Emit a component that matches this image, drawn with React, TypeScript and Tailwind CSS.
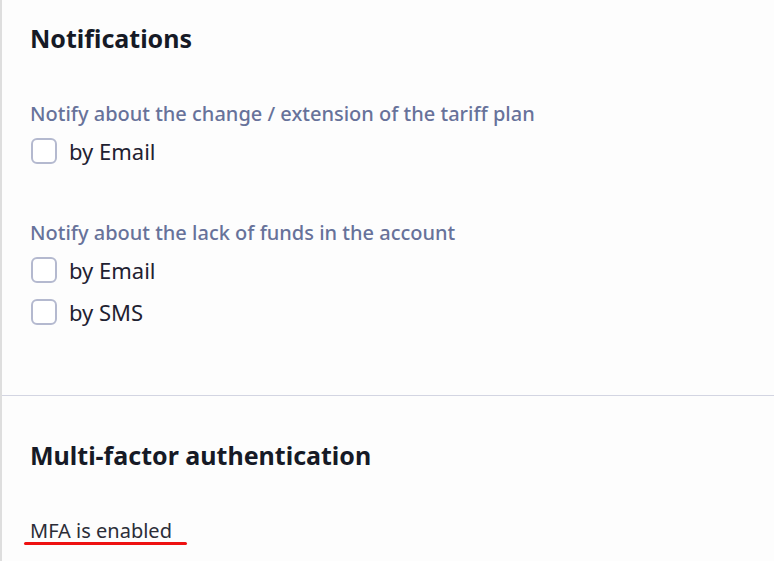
import React from 'react';

interface OptionProps {
  label: string;
}

const CheckOption: React.FC<OptionProps> = ({ label }) => (
  <label className="flex items-center gap-[12px] h-[42px] cursor-pointer">
    <span className="ml-[1px] w-[26px] h-[26px] rounded-[6px] border-2 border-[#b4b9cf] bg-white shrink-0" />
    <span className="text-[22px] text-[#1f2131] leading-[28px]">{label}</span>
  </label>
);

const NotifyGroup: React.FC<{ title: string; options: string[] }> = ({ title, options }) => (
  <div>
    <p className="text-[20px] font-medium text-[#67729a] leading-[24px]">{title}</p>
    <div className="mt-[4px]">
      {options.map((o) => (
        <CheckOption key={o} label={o} />
      ))}
    </div>
  </div>
);

export default function App() {
  return (
    <div
      className="w-full h-[561px] bg-[#fdfdfd] border-l-2 border-[#dedede] overflow-hidden"
      style={{ fontFamily: '"Noto Sans", Inter, sans-serif' }}
    >
      {/* notifications */}
      <section className="pl-[28px] pt-[22px] h-[396px] border-b border-[#d3d5e2]">
        <h2 className="text-[25px] font-bold text-[#161a26] leading-[32px]">Notifications</h2>
        <div className="mt-[48px] flex flex-col gap-[49px]">
          <NotifyGroup title="Notify about the change / extension of the tariff plan" options={['by Email']} />
          <NotifyGroup title="Notify about the lack of funds in the account" options={['by Email', 'by SMS']} />
        </div>
      </section>

      {/* mfa */}
      <section className="pl-[28px] pt-[43px]">
        <h2 className="text-[25px] font-bold text-[#161a26] leading-[32px]">Multi-factor authentication</h2>
        <div className="mt-[46px] relative inline-block">
          <span className="block text-[20px] text-[#2b2d38] leading-[28px]">MFA is enabled</span>
          <span className="absolute left-[-6px] w-[163px] bottom-[0px] h-[3px] rounded-full bg-[#ee1111]" />
        </div>
      </section>
    </div>
  );
}
